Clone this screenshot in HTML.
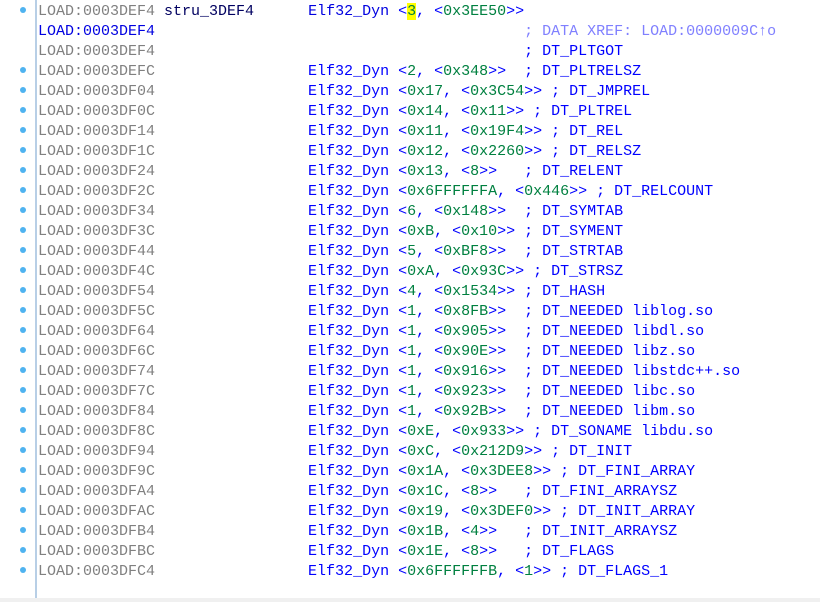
<!DOCTYPE html>
<html><head><meta charset="utf-8"><style>
html,body{margin:0;padding:0;background:#fff;width:820px;height:602px;overflow:hidden;position:relative}
.vl{position:absolute;left:35px;top:0;width:2px;height:598px;background:#b8cfe6}
.bot{position:absolute;left:0;top:598px;width:820px;height:4px;background:#f0f0f0}
pre{position:absolute;left:38px;top:2px;margin:0;font:15px/20px "Liberation Mono",monospace;color:#0000ff;white-space:pre}
.a{color:#808080}.b{color:#0000e0}.g{color:#008040}.n{color:#000060}.x{color:#8080ff}
.h{background:#ffff00}
.d{position:absolute;left:20px;width:6px;height:6px;border-radius:50%;background:#4fb3f0}
</style></head><body>
<div class="vl"></div><div class="bot"></div>
<div class="d" style="top:7px"></div>
<div class="d" style="top:67px"></div><div class="d" style="top:87px"></div><div class="d" style="top:107px"></div><div class="d" style="top:127px"></div><div class="d" style="top:147px"></div><div class="d" style="top:167px"></div><div class="d" style="top:187px"></div><div class="d" style="top:207px"></div><div class="d" style="top:227px"></div><div class="d" style="top:247px"></div><div class="d" style="top:267px"></div><div class="d" style="top:287px"></div><div class="d" style="top:307px"></div><div class="d" style="top:327px"></div><div class="d" style="top:347px"></div><div class="d" style="top:367px"></div><div class="d" style="top:387px"></div><div class="d" style="top:407px"></div><div class="d" style="top:427px"></div><div class="d" style="top:447px"></div><div class="d" style="top:467px"></div><div class="d" style="top:487px"></div><div class="d" style="top:507px"></div><div class="d" style="top:527px"></div><div class="d" style="top:547px"></div><div class="d" style="top:567px"></div>
<pre><span class="a">LOAD:0003DEF4</span> <span class="n">stru_3DEF4</span>      <span class="b">Elf32_Dyn</span> &lt;<span class="g h">3</span>, &lt;<span class="g">0x3EE50</span>&gt;&gt;
<span class="b">LOAD:0003DEF4</span>                                         <span class="x">; DATA XREF: LOAD:0000009C↑o</span>
<span class="a">LOAD:0003DEF4</span>                                         ; DT_PLTGOT
<span class="a">LOAD:0003DEFC</span>                 Elf32_Dyn &lt;<span class="g">2</span>, &lt;<span class="g">0x348</span>&gt;&gt;  ; DT_PLTRELSZ
<span class="a">LOAD:0003DF04</span>                 Elf32_Dyn &lt;<span class="g">0x17</span>, &lt;<span class="g">0x3C54</span>&gt;&gt; ; DT_JMPREL
<span class="a">LOAD:0003DF0C</span>                 Elf32_Dyn &lt;<span class="g">0x14</span>, &lt;<span class="g">0x11</span>&gt;&gt; ; DT_PLTREL
<span class="a">LOAD:0003DF14</span>                 Elf32_Dyn &lt;<span class="g">0x11</span>, &lt;<span class="g">0x19F4</span>&gt;&gt; ; DT_REL
<span class="a">LOAD:0003DF1C</span>                 Elf32_Dyn &lt;<span class="g">0x12</span>, &lt;<span class="g">0x2260</span>&gt;&gt; ; DT_RELSZ
<span class="a">LOAD:0003DF24</span>                 Elf32_Dyn &lt;<span class="g">0x13</span>, &lt;<span class="g">8</span>&gt;&gt;   ; DT_RELENT
<span class="a">LOAD:0003DF2C</span>                 Elf32_Dyn &lt;<span class="g">0x6FFFFFFA</span>, &lt;<span class="g">0x446</span>&gt;&gt; ; DT_RELCOUNT
<span class="a">LOAD:0003DF34</span>                 Elf32_Dyn &lt;<span class="g">6</span>, &lt;<span class="g">0x148</span>&gt;&gt;  ; DT_SYMTAB
<span class="a">LOAD:0003DF3C</span>                 Elf32_Dyn &lt;<span class="g">0xB</span>, &lt;<span class="g">0x10</span>&gt;&gt; ; DT_SYMENT
<span class="a">LOAD:0003DF44</span>                 Elf32_Dyn &lt;<span class="g">5</span>, &lt;<span class="g">0xBF8</span>&gt;&gt;  ; DT_STRTAB
<span class="a">LOAD:0003DF4C</span>                 Elf32_Dyn &lt;<span class="g">0xA</span>, &lt;<span class="g">0x93C</span>&gt;&gt; ; DT_STRSZ
<span class="a">LOAD:0003DF54</span>                 Elf32_Dyn &lt;<span class="g">4</span>, &lt;<span class="g">0x1534</span>&gt;&gt; ; DT_HASH
<span class="a">LOAD:0003DF5C</span>                 Elf32_Dyn &lt;<span class="g">1</span>, &lt;<span class="g">0x8FB</span>&gt;&gt;  ; DT_NEEDED liblog.so
<span class="a">LOAD:0003DF64</span>                 Elf32_Dyn &lt;<span class="g">1</span>, &lt;<span class="g">0x905</span>&gt;&gt;  ; DT_NEEDED libdl.so
<span class="a">LOAD:0003DF6C</span>                 Elf32_Dyn &lt;<span class="g">1</span>, &lt;<span class="g">0x90E</span>&gt;&gt;  ; DT_NEEDED libz.so
<span class="a">LOAD:0003DF74</span>                 Elf32_Dyn &lt;<span class="g">1</span>, &lt;<span class="g">0x916</span>&gt;&gt;  ; DT_NEEDED libstdc++.so
<span class="a">LOAD:0003DF7C</span>                 Elf32_Dyn &lt;<span class="g">1</span>, &lt;<span class="g">0x923</span>&gt;&gt;  ; DT_NEEDED libc.so
<span class="a">LOAD:0003DF84</span>                 Elf32_Dyn &lt;<span class="g">1</span>, &lt;<span class="g">0x92B</span>&gt;&gt;  ; DT_NEEDED libm.so
<span class="a">LOAD:0003DF8C</span>                 Elf32_Dyn &lt;<span class="g">0xE</span>, &lt;<span class="g">0x933</span>&gt;&gt; ; DT_SONAME libdu.so
<span class="a">LOAD:0003DF94</span>                 Elf32_Dyn &lt;<span class="g">0xC</span>, &lt;<span class="g">0x212D9</span>&gt;&gt; ; DT_INIT
<span class="a">LOAD:0003DF9C</span>                 Elf32_Dyn &lt;<span class="g">0x1A</span>, &lt;<span class="g">0x3DEE8</span>&gt;&gt; ; DT_FINI_ARRAY
<span class="a">LOAD:0003DFA4</span>                 Elf32_Dyn &lt;<span class="g">0x1C</span>, &lt;<span class="g">8</span>&gt;&gt;   ; DT_FINI_ARRAYSZ
<span class="a">LOAD:0003DFAC</span>                 Elf32_Dyn &lt;<span class="g">0x19</span>, &lt;<span class="g">0x3DEF0</span>&gt;&gt; ; DT_INIT_ARRAY
<span class="a">LOAD:0003DFB4</span>                 Elf32_Dyn &lt;<span class="g">0x1B</span>, &lt;<span class="g">4</span>&gt;&gt;   ; DT_INIT_ARRAYSZ
<span class="a">LOAD:0003DFBC</span>                 Elf32_Dyn &lt;<span class="g">0x1E</span>, &lt;<span class="g">8</span>&gt;&gt;   ; DT_FLAGS
<span class="a">LOAD:0003DFC4</span>                 Elf32_Dyn &lt;<span class="g">0x6FFFFFFB</span>, &lt;<span class="g">1</span>&gt;&gt; ; DT_FLAGS_1</pre>
</body></html>
